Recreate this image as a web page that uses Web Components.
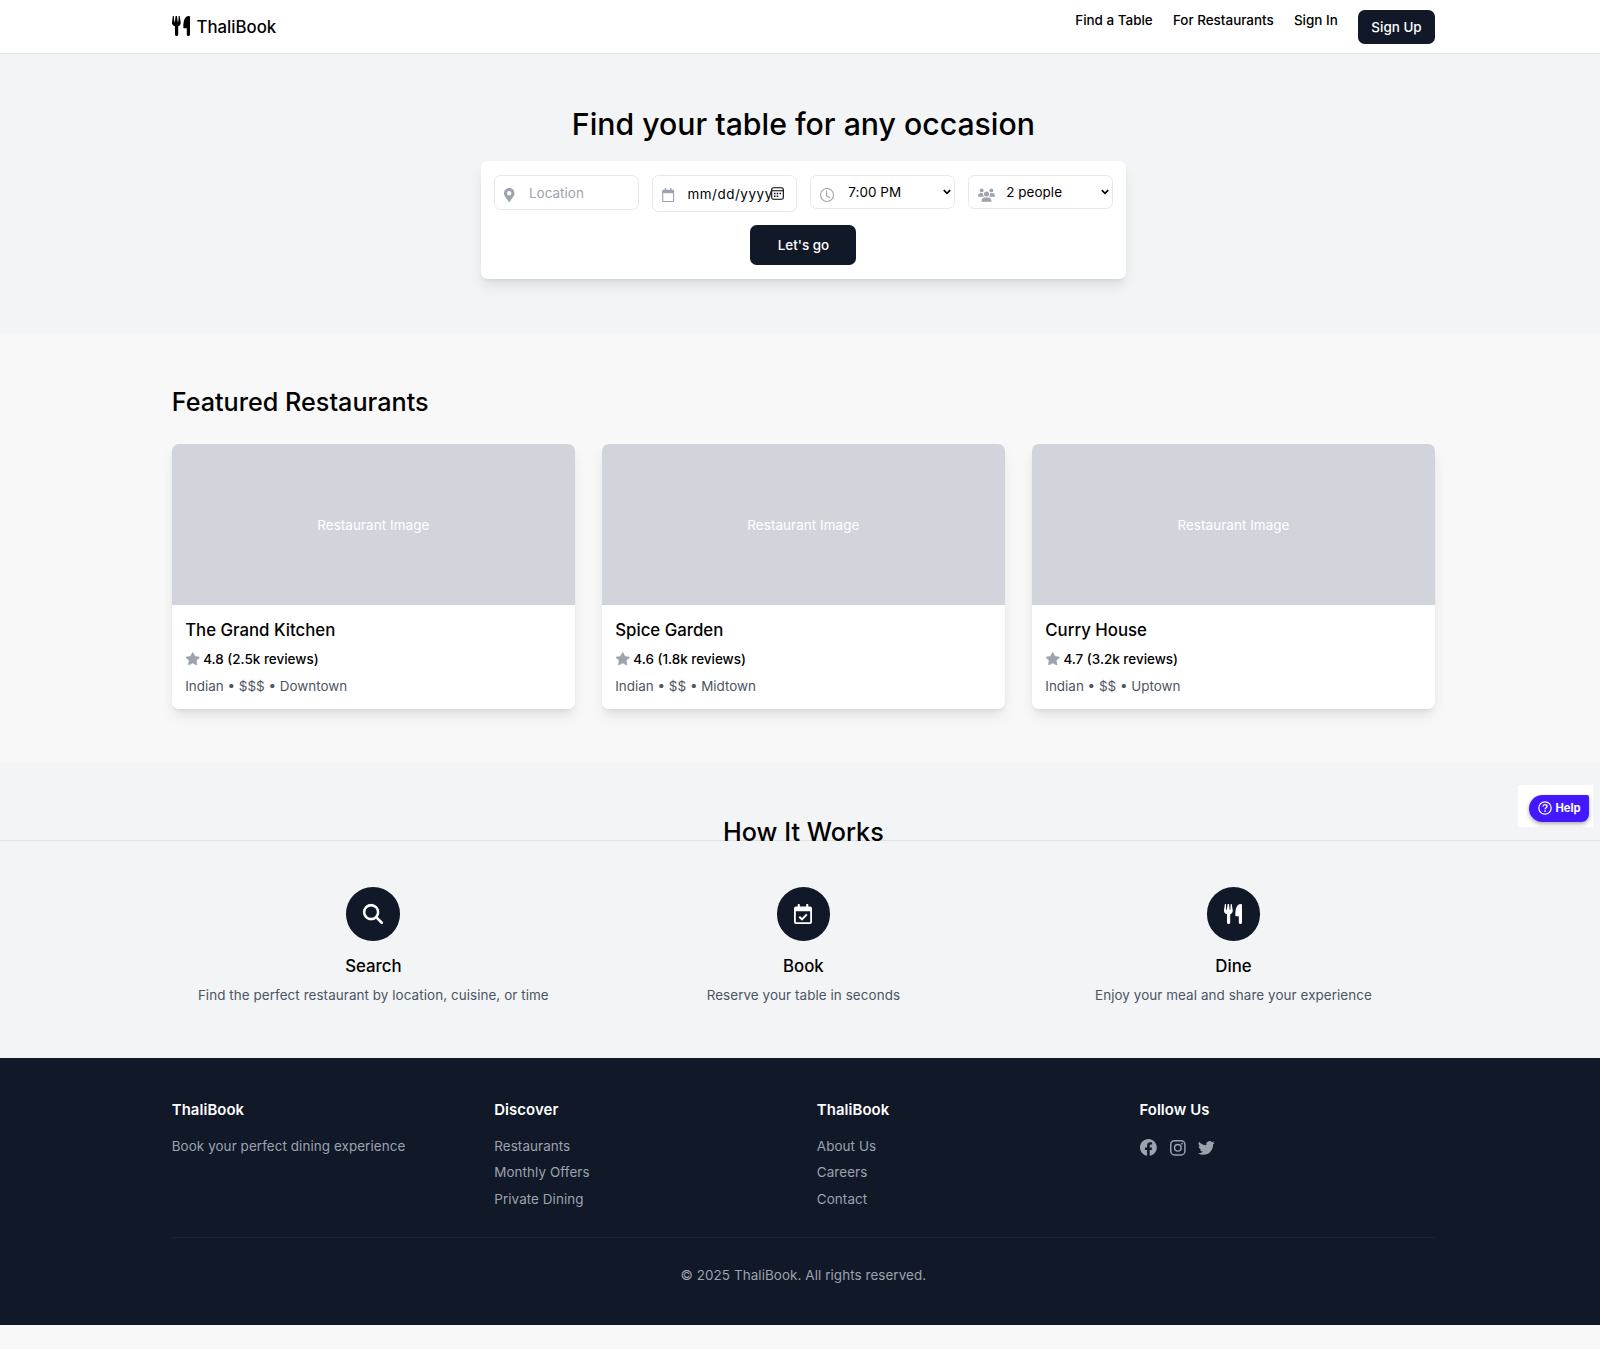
<!DOCTYPE html>
<html lang="en">
<head>
<meta charset="utf-8">
<title>ThaliBook</title>
<style>
html{font-size:13.44px}
body{margin:0;background:#f8f8f8;color:#000;font:400 1rem/1.5rem Inter,"Liberation Sans",sans-serif;overflow:hidden;height:1349px}
</style>
</head>
<body>
<tb-app></tb-app>
<script>
const ICONS={
 utensils:['0 0 18 20','<path d="M0.900 0h1l.35 5.800h.65L3.600 0h1.400l.7 5.800h.65L6.700 0h1l1 6.200c.2 2.100-.8 3.500-2.500 4V18.400a1.600 1.600 0 0 1-3.200 0V10.200C.9 9.700-.2 8.300 0 6.200zM18 1V18.400a1.600 1.600 0 0 1-3.200 0V12.300h-2.600c-.5 0-.9-.3-.9-.8 0-5.200.6-8.800 2.700-10.500C15.500-.2 18-.5 18 1z"/>'],
 pin:['0 0 384 512','<path d="M172.300 501.700C27 291 0 269.400 0 192 0 86 86 0 192 0s192 86 192 192c0 77.400-27 99-172.300 309.700a24 24 0 0 1-39.400 0zM192 272a80 80 0 1 0 0-160 80 80 0 0 0 0 160z"/>'],
 calendar:['0 0 12 14','<path fill-rule="evenodd" d="M2.500 .4a.4.4 0 0 1 .4-.4h.7a.4.4 0 0 1 .4.4v1.350h4V.4a.4.4 0 0 1 .4-.4h.7a.4.4 0 0 1 .4.4v1.350h1.200A1.300 1.300 0 0 1 12 3.050v9.600A1.350 1.350 0 0 1 10.700 14H1.300A1.350 1.350 0 0 1 0 12.650v-9.600a1.300 1.300 0 0 1 1.300-1.300h1.200zM1.100 5.200v7.400c0 .2.100.3.300.3h9.200c.2 0 .3-.1.300-.3V5.200z"/>'],
 clock:['0 0 16 16','<path d="M8 3.500a.5.5 0 0 0-1 0V9a.5.5 0 0 0 .252.434l3.500 2a.5.5 0 0 0 .496-.868L8 8.710z" stroke="currentColor" stroke-width=".25"/><circle cx="8" cy="8" r="7.400" fill="none" stroke="currentColor" stroke-width="1.250"/>'],
 users:['0 0 17 14','<circle cx="3.700" cy="2.400" r="1.900"/><circle cx="13.300" cy="2.400" r="1.900"/><circle cx="8.500" cy="6.100" r="2.500"/><path d="M0 8.400C0 6 1.300 5 3.200 5c.9 0 1.600.2 2 .6-.3 1.300 0 2.300.8 3.100H.3zM17 8.400C17 6 15.700 5 13.800 5c-.9 0-1.600.2-2 .6.3 1.300 0 2.300-.8 3.100h5.700zM3.500 13.700c0-2.900 1.300-4.200 3.400-4.200h3.200c2.100 0 3.400 1.300 3.400 4.200z"/>'],
 picker:['0 0 13 13','<rect x=".7" y=".7" width="11.600" height="11.600" rx="1.800" fill="none" stroke="currentColor" stroke-width="1.100"/><path d="M.7 3.200h11.600v1H.7zM3 5.700h1.500v1.500H3zM5.700 5.700h1.500v1.500H5.700zM8.500 5.700H10v1.500H8.500zM3 8.500h1.500V10H3zM5.700 8.500h1.500V10H5.700z"/>'],
 chevron:['0 0 8 6','<path d="M.8 1.100 4 4.300 7.200 1.100" fill="none" stroke="currentColor" stroke-width="1.700"/>'],
 star:['0 0 16 16','<path d="M3.612 15.443c-.386.198-.824-.149-.746-.592l.830-4.730L.173 6.765c-.329-.314-.158-.888.283-.950l4.898-.696L7.538.792c.197-.390.730-.390.927 0l2.184 4.327 4.898.696c.441.062.612.636.282.950l-3.522 3.356.830 4.730c.078.443-.360.790-.746.592L8 13.187z" stroke="currentColor" stroke-width=".5"/>'],
 search:['0 0 16 16','<path stroke="currentColor" stroke-width=".1" d="M11.742 10.344a6.500 6.500 0 1 0-1.397 1.398h-.001q.044.060.098.115l3.850 3.850a1 1 0 0 0 1.415-1.414l-3.850-3.850a1 1 0 0 0-.115-.100zM12 6.500a5.500 5.500 0 1 1-11 0 5.500 5.500 0 0 1 11 0"/><circle cx="6.500" cy="6.500" r="5.400" fill="none" stroke="currentColor" stroke-width="1.700"/>'],
 check:['0 0 18 20','<path fill-rule="evenodd" d="M3.700.6a.6.6 0 0 1 .6-.6h.9a.6.600 0 0 1 .6.6v1.900h6.400V.6a.6.6 0 0 1 .6-.6h.9a.6.6 0 0 1 .6.6v1.900h1.800A1.900 1.900 0 0 1 18 4.400v13.700a1.900 1.900 0 0 1-1.900 1.900H1.900A1.900 1.900 0 0 1 0 18.100V4.400a1.900 1.900 0 0 1 1.900-1.900h1.800zM1.800 7.300v10.500c0 .3.100.4.400.4h13.600c.3 0 .4-.1.400-.4V7.300z"/><path d="m5.300 12.700 2.700 2.700 4.800-5" fill="none" stroke="currentColor" stroke-width="2"/>'],
 facebook:['0 0 16 16','<path d="M16 8.049c0-4.446-3.582-8.050-8-8.050C3.580 0-.002 3.603-.002 8.050c0 4.017 2.926 7.347 6.750 7.951v-5.625h-2.030V8.050H6.750V6.275c0-2.017 1.195-3.131 3.022-3.131.876 0 1.791.157 1.791.157v1.980h-1.009c-.993 0-1.303.621-1.303 1.258v1.510h2.218l-.354 2.326H9.250V16c3.824-.604 6.750-3.934 6.750-7.951"/>'],
 instagram:['0 0 16 16','<g fill="none" stroke="currentColor" stroke-width="1.500"><rect x=".75" y=".75" width="14.500" height="14.500" rx="4"/><circle cx="8" cy="8" r="3.350"/></g><circle cx="12.270" cy="3.730" r=".96"/>'],
 twitter:['0 0 16 16','<path d="M5.026 15c6.038 0 9.341-5.003 9.341-9.334q.002-.211-.006-.422A6.700 6.700 0 0 0 16 3.542a6.700 6.700 0 0 1-1.889.518 3.300 3.300 0 0 0 1.447-1.817 6.500 6.500 0 0 1-2.087.793A3.286 3.286 0 0 0 7.875 6.030a9.320 9.320 0 0 1-6.767-3.429 3.290 3.290 0 0 0 1.018 4.382A3.300 3.300 0 0 1 .640 6.575v.045a3.290 3.290 0 0 0 2.632 3.218 3.200 3.200 0 0 1-.865.115 3 3 0 0 1-.614-.057 3.280 3.280 0 0 0 3.067 2.277A6.600 6.600 0 0 1 .780 13.580a6 6 0 0 1-.780-.045A9.340 9.340 0 0 0 5.026 15"/>'],
 help:['0 0 14 14','<circle cx="7" cy="7" r="6.200" fill="none" stroke="currentColor" stroke-width="1.200"/><path d="M5 5.500C5.100 4.200 5.900 3.600 7 3.600c1.200 0 2 .7 2 1.700 0 1.500-1.900 1.500-1.900 3" fill="none" stroke="currentColor" stroke-width="1.400"/><circle cx="7.100" cy="10.100" r=".9"/>']
};
const define=(name,css,html)=>customElements.define(name,class extends HTMLElement{
 constructor(){super();this.attachShadow({mode:'open'})}
 connectedCallback(){
  const body=typeof html==='function'?html(this):html;
  this.shadowRoot.innerHTML=`<style>*{box-sizing:border-box}${css}</style>${body}`;
 }
});

define('tb-icon',`:host{display:block;flex:none}svg{display:block;width:100%;height:100%;fill:currentColor;overflow:visible}`,
 el=>{const [box,art]=ICONS[el.getAttribute('name')];return `<svg viewBox="${box}" aria-hidden="true">${art}</svg>`});

define('tb-container',`:host{display:block;box-sizing:border-box;width:96rem;margin:0 auto;padding:0 1rem}`,`<slot></slot>`);

define('tb-button',`:host{display:block}
 button{display:block;font:500 1rem/1.5rem Inter,sans-serif;color:#fff;background:#111827;border:0;border-radius:.5rem;padding:var(--pad,.5rem 1rem)}`,
 `<button><slot></slot></button>`);

define('tb-header',`:host{display:block;box-sizing:border-box;height:54.400px;background:#fff;border-bottom:1px solid #e5e7eb}
 .bar{display:flex;justify-content:space-between;padding-top:.75rem}
 .logo{display:flex;align-items:center;gap:.5rem;font:500 1.25rem/1.75rem Inter,sans-serif;height:2.500rem;padding-top:1px}
 .logo tb-icon{width:18px;height:20px;margin-top:-2px}
 nav{display:flex;align-items:flex-start;gap:1.5rem;font-weight:500}`,
 `<tb-container><div class="bar"><div class="logo"><tb-icon name="utensils"></tb-icon><span>ThaliBook</span></div>
 <nav><span>Find a Table</span><span>For Restaurants</span><span>Sign In</span><tb-button>Sign Up</tb-button></nav></div></tb-container>`);

define('tb-field',`:host{display:flex;box-sizing:border-box;align-self:start;height:var(--h);border:1px solid #e5e7eb;border-radius:.5rem;background:#fff;padding-left:9px;min-width:0}
 .icon{width:24.600px;flex:none;color:#9ca3af;padding-top:12px}
 .icon tb-icon{width:var(--w);height:14px}
 .text{flex:1;min-width:0;overflow:hidden;white-space:nowrap;align-self:center}
 .end{align-self:center}
 :host([kind=text]) .text{color:#9ca3af;padding-top:1px;letter-spacing:.05px}
 :host([kind=date]) .text{letter-spacing:.55px;padding:1px 0 0 .6px}
 :host([kind=date]) .end{width:13px;height:13px;margin-right:12px}
 :host([kind=select]) .end{width:8px;height:6px;margin:1px 3px 0 0}
 :host([kind=select]) .text{padding:1px 0 0 3.600px;letter-spacing:.05px}`,
 el=>{const k=el.getAttribute('kind');return `<div class="icon"><tb-icon name="${el.getAttribute('icon')}"></tb-icon></div><div class="text"><slot></slot></div>${k==='date'?'<tb-icon class="end" name="picker"></tb-icon>':k==='select'?'<tb-icon class="end" name="chevron"></tb-icon>':''}`});

define('tb-hero',`:host{display:block;box-sizing:border-box;background:#f3f4f6;padding:4rem 0;height:278.600px}
 h1{margin:0 0 19.600px;font:500 2.250rem/2.500rem Inter,sans-serif;text-align:center}
 .search{width:48rem;margin:0 auto;background:#fff;border-radius:.5rem;padding:1rem;box-shadow:0 8.400px 12.600px -2.500px #0000001a,0 3.400px 5px -3.400px #0000001a}
 .fields{display:grid;grid-template-columns:repeat(4,minmax(0,1fr));gap:1rem;height:2.750rem;margin-bottom:1rem}
 .go{display:flex;justify-content:center}
 .go tb-button{--pad:.75rem 2.030rem}`,
 `<h1>Find your table for any occasion</h1><div class="search"><div class="fields">
 <tb-field kind="text" icon="pin" style="--h:35.300px;--w:10.500px">Location</tb-field>
 <tb-field kind="date" icon="calendar" style="--h:37px;--w:12.300px">mm/dd/yyyy</tb-field>
 <tb-field kind="select" icon="clock" style="--h:34px;--w:14px">7:00 PM</tb-field>
 <tb-field kind="select" icon="users" style="--h:34px;--w:17px">2 people</tb-field></div>
 <div class="go"><tb-button>Let's go</tb-button></div></div>`);

define('tb-card',`:host{display:block;background:#fff;border-radius:.5rem;overflow:hidden;box-shadow:0 8.400px 12.600px -2.500px #0000001a,0 3.400px 5px -3.400px #0000001a}
 .image{height:12rem;background:#d1d5db;color:#fff;display:flex;align-items:center;justify-content:center;letter-spacing:.065px;padding-top:1px}
 .body{display:flex;flex-direction:column;gap:.5rem;padding:1rem}
 h3{margin:0;font:500 1.250rem/1.750rem Inter,sans-serif}
 .rating{display:flex;align-items:center;gap:.3rem;font-weight:500}
 .rating tb-icon{width:1rem;height:1rem;margin-left:.6px;color:#9ca3af}
 .meta{color:#4b5563}`,
 `<div class="image">Restaurant Image</div><div class="body"><h3><slot name="title"></slot></h3>
 <div class="rating"><tb-icon name="star"></tb-icon><slot name="rating"></slot></div><div class="meta"><slot></slot></div></div>`);

define('tb-featured',`:host{display:block;padding:4rem 0}
 h2{margin:0 0 2rem;font:500 1.875rem/2.250rem Inter,sans-serif}
 .grid{display:grid;grid-template-columns:repeat(3,1fr);gap:2rem}`,
 `<tb-container><h2>Featured Restaurants</h2><div class="grid">
 <tb-card><span slot="title">The Grand Kitchen</span><span slot="rating">4.8 (2.5k reviews)</span>Indian • $$$ • Downtown</tb-card>
 <tb-card><span slot="title">Spice Garden</span><span slot="rating">4.6 (1.8k reviews)</span>Indian • $$ • Midtown</tb-card>
 <tb-card><span slot="title">Curry House</span><span slot="rating">4.7 (3.2k reviews)</span>Indian • $$ • Uptown</tb-card></div></tb-container>`);

define('tb-step',`:host{display:flex;flex-direction:column;align-items:center;text-align:center}
 .disc{width:4rem;height:4rem;border-radius:50%;background:#111827;color:#fff;display:flex;align-items:center;justify-content:center;margin-bottom:14.100px}
 .disc tb-icon{width:var(--w,18px);height:20px}
 h3{margin:0 0 6px;font:500 1.250rem/1.750rem Inter,sans-serif}
 p{margin:0;color:#4b5563;letter-spacing:.065px}`,
 el=>`<div class="disc"><tb-icon name="${el.getAttribute('icon')}"></tb-icon></div><h3>${el.getAttribute('heading')}</h3><p><slot></slot></p>`);

define('tb-how',`:host{display:block;position:relative;background:#f3f4f6;padding:4rem 0 53.400px}
 .rule{position:absolute;left:0;right:0;top:77px;height:1px;background:#dfe1e5}
 tb-container{position:relative}
 h2{margin:0 0 3rem;font:500 1.875rem/2.250rem Inter,sans-serif;text-align:center}
 .grid{display:grid;grid-template-columns:repeat(3,1fr);gap:2rem}`,
 `<div class="rule"></div><tb-container><h2>How It Works</h2><div class="grid">
 <tb-step icon="search" heading="Search" style="--w:20px">Find the perfect restaurant by location, cuisine, or time</tb-step>
 <tb-step icon="check" heading="Book">Reserve your table in seconds</tb-step>
 <tb-step icon="utensils" heading="Dine">Enjoy your meal and share your experience</tb-step></div></tb-container>`);

define('tb-footer-column',`:host{display:block}
 h4{margin:0 0 12.900px;padding-top:.600px;font:600 1.110rem/1.750rem Inter,sans-serif;color:#fff}
 .list{display:flex;flex-direction:column;gap:.5rem}`,
 el=>`<h4>${el.getAttribute('heading')}</h4><div class="list"><slot></slot></div>`);

define('tb-footer',`:host{display:block;background:#111827;color:#9ca3af;padding:3rem 0;letter-spacing:.07px}
 .cols{display:grid;grid-template-columns:repeat(4,1fr);gap:2rem;height:139.200px;border-bottom:1px solid #1b2332}
 .social{display:flex;align-items:center;gap:13px;padding:3.500px 0 0 .4px}
 .social tb-icon{width:1.250rem;height:1.250rem}
 .social tb-icon[name=instagram]{width:15.700px;height:15.700px}
 .copy{padding-top:2rem;text-align:center}`,
 `<tb-container><div class="cols">
 <tb-footer-column heading="ThaliBook"><span>Book your perfect dining experience</span></tb-footer-column>
 <tb-footer-column heading="Discover"><span>Restaurants</span><span>Monthly Offers</span><span>Private Dining</span></tb-footer-column>
 <tb-footer-column heading="ThaliBook"><span>About Us</span><span>Careers</span><span>Contact</span></tb-footer-column>
 <tb-footer-column heading="Follow Us"><div class="social"><tb-icon name="facebook"></tb-icon><tb-icon name="instagram"></tb-icon><tb-icon name="twitter"></tb-icon></div></tb-footer-column>
 </div><div class="copy">© 2025 ThaliBook. All rights reserved.</div></tb-container>`);

define('tb-help',`:host{position:absolute;left:1518px;top:785px;width:75px;height:42px;box-sizing:border-box;background:#fff;padding:9.500px 4px 0 11px}
 .pill{display:flex;align-items:center;gap:4px;height:27px;padding-left:8.500px;background:#4318ff;color:#fff;border-radius:14px 2px 8px 14px;box-shadow:0 2px 4px #0005;font:700 11.200px/27px Inter,sans-serif}
 tb-icon{width:14px;height:14px}`,
 `<div class="pill"><tb-icon name="help"></tb-icon><span>Help</span></div>`);

define('tb-app',`:host{display:block;width:1606.800px}`,
 `<tb-header></tb-header><tb-hero></tb-hero><tb-featured></tb-featured><tb-how></tb-how><tb-footer></tb-footer><tb-help></tb-help>`);
</script>
</body>
</html>
